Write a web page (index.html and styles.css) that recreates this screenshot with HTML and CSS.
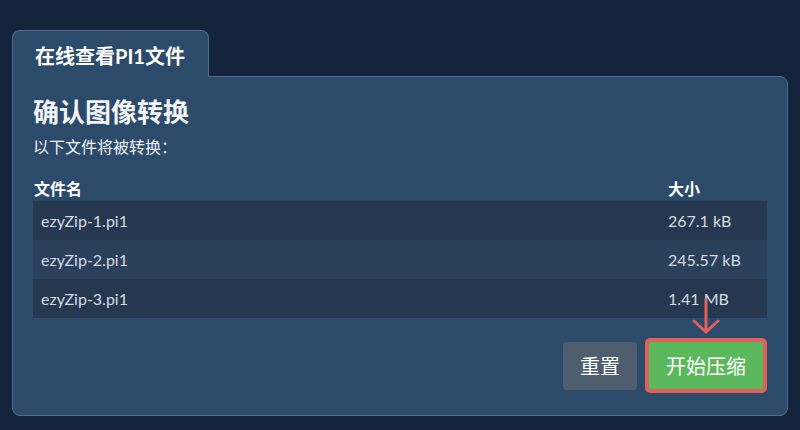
FILE: index.html
```html
<!DOCTYPE html>
<html lang="zh">
<head>
<meta charset="utf-8">
<title>在线查看PI1文件</title>
<link rel="stylesheet" href="styles.css">
</head>
<body>
<div class="wrap">
  <div class="tabs">
    <div class="tab">在线查看PI1文件</div>
  </div>
  <div class="panel">
    <h1 class="title">确认图像转换</h1>
    <p class="subtitle">以下文件将被转换：</p>
    <div class="table">
      <div class="row head">
        <div class="cell name">文件名</div>
        <div class="cell size">大小</div>
      </div>
      <div class="row odd">
        <div class="cell name">ezyZip-1.pi1</div>
        <div class="cell size">267.1 kB</div>
      </div>
      <div class="row even">
        <div class="cell name">ezyZip-2.pi1</div>
        <div class="cell size">245.57 kB</div>
      </div>
      <div class="row odd">
        <div class="cell name">ezyZip-3.pi1</div>
        <div class="cell size">1.41 MB</div>
      </div>
    </div>
    <div class="actions">
      <button class="btn reset">重置</button>
      <div class="start-wrap">
        <svg class="arrow" width="30" height="36" viewBox="0 0 30 36">
          <path d="M15 1 V33 M3 22 L15 33 L27 22" fill="none" stroke="#e0605a" stroke-width="3" stroke-linecap="round" stroke-linejoin="round"/>
        </svg>
        <button class="btn start">开始压缩</button>
      </div>
    </div>
  </div>
</div>
</body>
</html>
```

FILE: styles.css
```css
html, body {
  margin: 0;
  padding: 0;
  background: #12233a;
}
body {
  font-family: Lato, "Noto Sans CJK SC", sans-serif;
  color: #ffffff;
}
.wrap {
  padding: 30px 12px 0 12px;
}
.tabs {
  display: flex;
}
.tab {
  position: relative;
  z-index: 1;
  background: #2c4a6a;
  border: 1px solid #506d8d;
  border-bottom: none;
  border-radius: 8px 8px 0 0;
  margin-bottom: -1px;
  padding: 12px 23px 8px 22px;
  font-size: 20px;
  line-height: 26px;
  font-weight: 700;
  color: #ffffff;
}
.panel {
  background: #2c4a6a;
  border: 1px solid #506d8d;
  border-radius: 0 8px 8px 8px;
  padding: 20px 20px 22px 20px;
}
.title {
  margin: 0;
  font-size: 26px;
  line-height: 30px;
  font-weight: 700;
  color: #f2f4f7;
}
.subtitle {
  margin: 10px 0 0 0;
  font-size: 16px;
  line-height: 20px;
  color: #eef1f5;
}
.table {
  margin-top: 19px;
}
.row {
  display: grid;
  grid-template-columns: 1fr 107px;
  align-items: center;
  height: 39px;
}
.row.head {
  height: 25px;
}
.row.odd {
  background: #26384f;
}
.row.even {
  background: #2b405a;
}
.cell {
  padding: 0 8px;
  font-size: 16px;
  color: #d5dbe3;
}
.row.head .cell {
  color: #ffffff;
  font-weight: 700;
  padding-bottom: 2px;
}
.row.head .cell.name {
  padding-left: 1px;
}
.actions {
  display: flex;
  justify-content: flex-end;
  align-items: center;
  gap: 8px;
  margin-top: 20px;
}
.btn {
  font-family: Lato, "Noto Sans CJK SC", sans-serif;
  font-size: 20px;
  color: #ffffff;
  border: none;
  cursor: pointer;
}
.reset {
  background: #4f5e6e;
  border-radius: 4px;
  height: 48px;
  width: 74px;
  padding: 0;
}
.start-wrap {
  position: relative;
  display: flex;
}
.start {
  background: #5cb85c;
  border: 4px solid #e0605a;
  border-radius: 5px;
  height: 55px;
  width: 122px;
  padding: 0;
}
.arrow {
  position: absolute;
  left: 50%;
  margin-left: -15px;
  bottom: 100%;
  margin-bottom: 3px;
}
```
